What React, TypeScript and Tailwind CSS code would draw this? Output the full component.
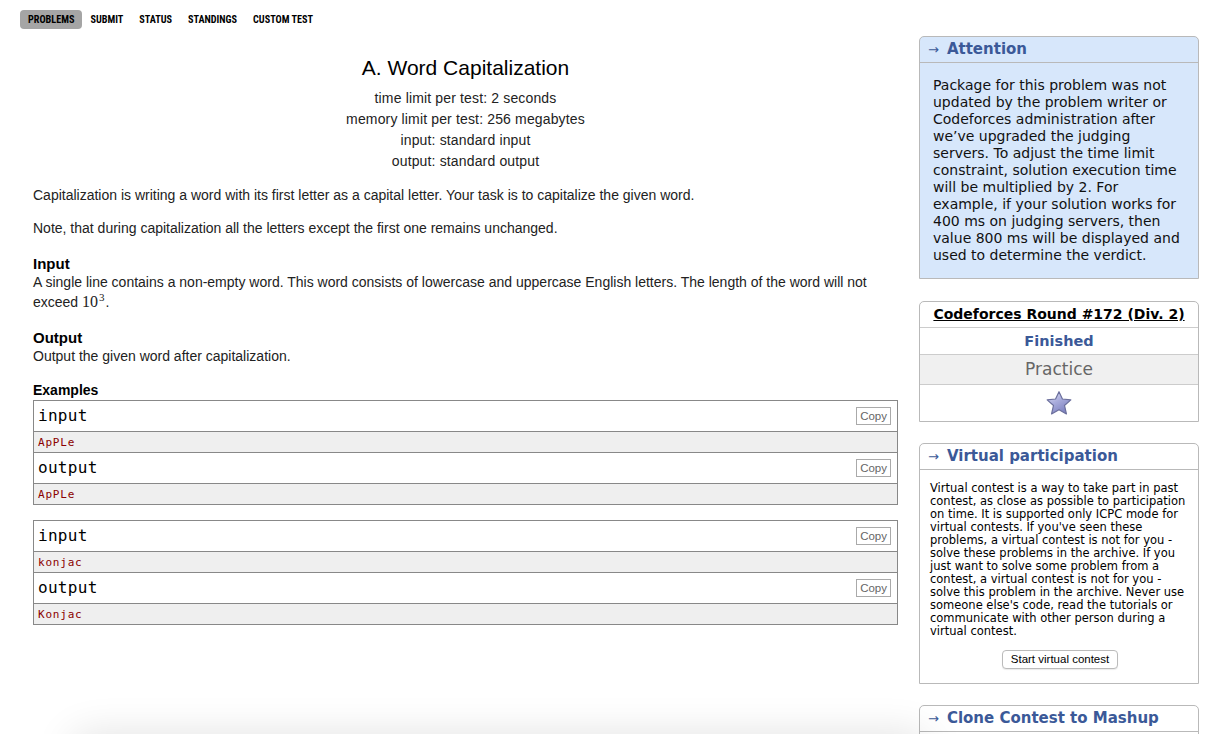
import React from 'react'

const menu = ['PROBLEMS', 'SUBMIT', 'STATUS', 'STANDINGS', 'CUSTOM TEST']

const tests = [
  { input: 'ApPLe', output: 'ApPLe' },
  { input: 'konjac', output: 'Konjac' },
]

const sans = 'font-["Liberation_Sans",Arial,sans-serif]'
const verdana = 'font-["DejaVu_Sans",Verdana,sans-serif]'
const mono = 'font-["DejaVu_Sans_Mono",Menlo,monospace]'

function CopyButton() {
  return (
    <span className={`${sans} text-[11.5px] leading-[16px] text-[#666] border border-[#aaa] px-[3px] bg-white`}>
      Copy
    </span>
  )
}

function SampleBlock({ label, value }: { label: string; value: string }) {
  return (
    <>
      <div className="flex items-center justify-between h-[30px] pl-[4px] pr-[6px] bg-white">
        <span className={`${mono} text-[16px] text-black tracking-[0.3px]`}>{label}</span>
        <CopyButton />
      </div>
      <div className={`${mono} text-[11px] leading-[21px] h-[21px] pl-[4px] bg-[#efefef] text-[#8b0000] border-t border-[#888] tracking-[0.8px]`}>
        {value}
      </div>
    </>
  )
}

function Star() {
  return (
    <svg width="28" height="26" viewBox="0 0 26 24">
      <defs>
        <linearGradient id="starFill" x1="0" y1="0" x2="0.6" y2="1">
          <stop offset="0" stopColor="#e4e6f7" />
          <stop offset="0.5" stopColor="#a9acdc" />
          <stop offset="1" stopColor="#7e82c0" />
        </linearGradient>
      </defs>
      <path
        d="M13 1.5 L16.2 8.3 L24 9.1 L18.1 14.3 L19.9 22.2 L13 18.2 L6.1 22.2 L7.9 14.3 L2 9.1 L9.8 8.3 Z"
        fill="url(#starFill)"
        stroke="#6b6f9c"
        strokeWidth="1.1"
        strokeLinejoin="round"
      />
    </svg>
  )
}

function SideBox({ title, children, tint }: { title: string; children: React.ReactNode; tint?: boolean }) {
  return (
    <div className={`border border-[#b9b9b9] rounded-t-[5px] ${tint ? 'bg-[#d7e7fb]' : 'bg-white'}`}>
      <div className={`${verdana} h-[26px] flex items-center pl-[8px] border-b border-[#b9b9b9] font-bold text-[15px] text-[#3b5998]`}>
        <span className="text-[13px] font-normal mr-[8px] text-[#3b5998]">→</span>
        {title}
      </div>
      {children}
    </div>
  )
}

export default function App() {
  return (
    <div className="relative h-[734px] bg-white overflow-hidden">
      <div className="flex pl-[20px] pt-[10px]">
        {/* main column */}
        <div className="w-[878px]">
          <div className="flex items-center h-[19px] font-['Liberation_Sans_Narrow','Roboto_Condensed',sans-serif] font-bold text-[10.2px] text-black">
            {menu.map((m, i) => (
              <span
                key={m}
                className={`px-[8px] h-[19px] leading-[19px] rounded-[4px] ${i === 0 ? 'bg-[#a5a5a5]' : ''}`}
              >
                {m}
              </span>
            ))}
          </div>

          <div className={`${sans} ml-[13px] w-[865px] text-[#222]`}>
            <div className="text-center">
              <div className="text-[21px] leading-[24px] mt-[27px] text-black">A. Word Capitalization</div>
              <div className="text-[14px] leading-[21px] mt-[8px] tracking-[0.15px]">
                <div>time limit per test: 2 seconds</div>
                <div>memory limit per test: 256 megabytes</div>
                <div>input: standard input</div>
                <div>output: standard output</div>
              </div>
            </div>

            <div className="text-[14px] leading-[19px] mt-[14px] space-y-[14px]">
              <p>Capitalization is writing a word with its first letter as a capital letter. Your task is to capitalize the given word.</p>
              <p>Note, that during capitalization all the letters except the first one remains unchanged.</p>
            </div>

            <div className="mt-[16px]">
              <div className="font-bold text-[15px] leading-[19px] text-black">Input</div>
              <p className="text-[14px] leading-[19px] pr-[10px]">
                A single line contains a non-empty word. This word consists of lowercase and uppercase English letters. The length of the word will not exceed{' '}
                <span className="font-['Liberation_Serif',serif] text-[16px] leading-[19px]">
                  10<sup className="text-[11px] leading-none -top-[6px] ml-[1px]">3</sup>
                </span>
                <span className="ml-[1px]">.</span>
              </p>
            </div>

            <div className="mt-[16px]">
              <div className="font-bold text-[15px] leading-[19px] text-black">Output</div>
              <p className="text-[14px] leading-[19px]">Output the given word after capitalization.</p>
            </div>

            <div className="mt-[16px]">
              <div className="font-bold text-[14px] leading-[17px] text-black">Examples</div>
              <div className="space-y-[15px] mt-[1px]">
                {tests.map((t, i) => (
                  <div key={i} className="border border-[#888]">
                    <SampleBlock label="input" value={t.input} />
                    <div className="border-t border-[#888]">
                      <SampleBlock label="output" value={t.output} />
                    </div>
                  </div>
                ))}
              </div>
            </div>
          </div>
        </div>

        {/* sidebar */}
        <div className={`${verdana} ml-[21px] w-[280px] pt-[26px] text-black`}>
          <SideBox title="Attention" tint>
            <div className="text-[14px] leading-[17px] pl-[13px] pr-[14px] pt-[14px] pb-[14px] text-[#111]">
              Package for this problem was not updated by the problem writer or Codeforces administration after we’ve upgraded the judging servers. To adjust the time limit constraint, solution execution time will be multiplied by 2. For example, if your solution works for 400 ms on judging servers, then value 800 ms will be displayed and used to determine the verdict.
            </div>
          </SideBox>

          <div className="mt-[22px] border border-[#b9b9b9] rounded-t-[5px] text-center">
            <div className="h-[25px] leading-[24px] font-bold text-[14px] underline">Codeforces Round #172 (Div. 2)</div>
            <div className="h-[27px] leading-[26px] border-t border-[#ccc] font-bold text-[14.5px] text-[#3b5998]">Finished</div>
            <div className="h-[30px] leading-[29px] border-t border-[#ccc] bg-[#f0f0f0] text-[17px] text-[#666]">Practice</div>
            <div className="h-[37px] border-t border-[#ccc] flex items-center justify-center">
              <Star />
            </div>
          </div>

          <div className="mt-[21px]">
            <SideBox title="Virtual participation">
              <div className="text-[11.5px] leading-[13px] pl-[10px] pr-[8px] pt-[12px] pb-[14px]">
                <p>
                  Virtual contest is a way to take part in past contest, as close as possible to participation on time. It is supported only ICPC mode for virtual contests. If you've seen these problems, a virtual contest is not for you - solve these problems in the archive. If you just want to solve some problem from a contest, a virtual contest is not for you - solve this problem in the archive. Never use someone else's code, read the tutorials or communicate with other person during a virtual contest.
                </p>
                <div className="flex justify-center mt-[12px]">
                  <span className={`${sans} text-[11.5px] leading-[17px] px-[8px] border border-[#bbb] rounded-[4px] bg-white shadow-[0_1px_1px_rgba(0,0,0,0.08)]`}>
                    Start virtual contest
                  </span>
                </div>
              </div>
            </SideBox>
          </div>

          <div className="mt-[21px]">
            <SideBox title="Clone Contest to Mashup">
              <div className="h-[20px]" />
            </SideBox>
          </div>
        </div>
      </div>

      {/* floating footer bar just below the viewport, only its shadow shows */}
      <div className="absolute left-[70px] w-[860px] top-[734px] h-[40px] rounded-[20px] bg-white shadow-[0_0_40px_rgba(0,0,0,0.12)]" />
    </div>
  )
}
